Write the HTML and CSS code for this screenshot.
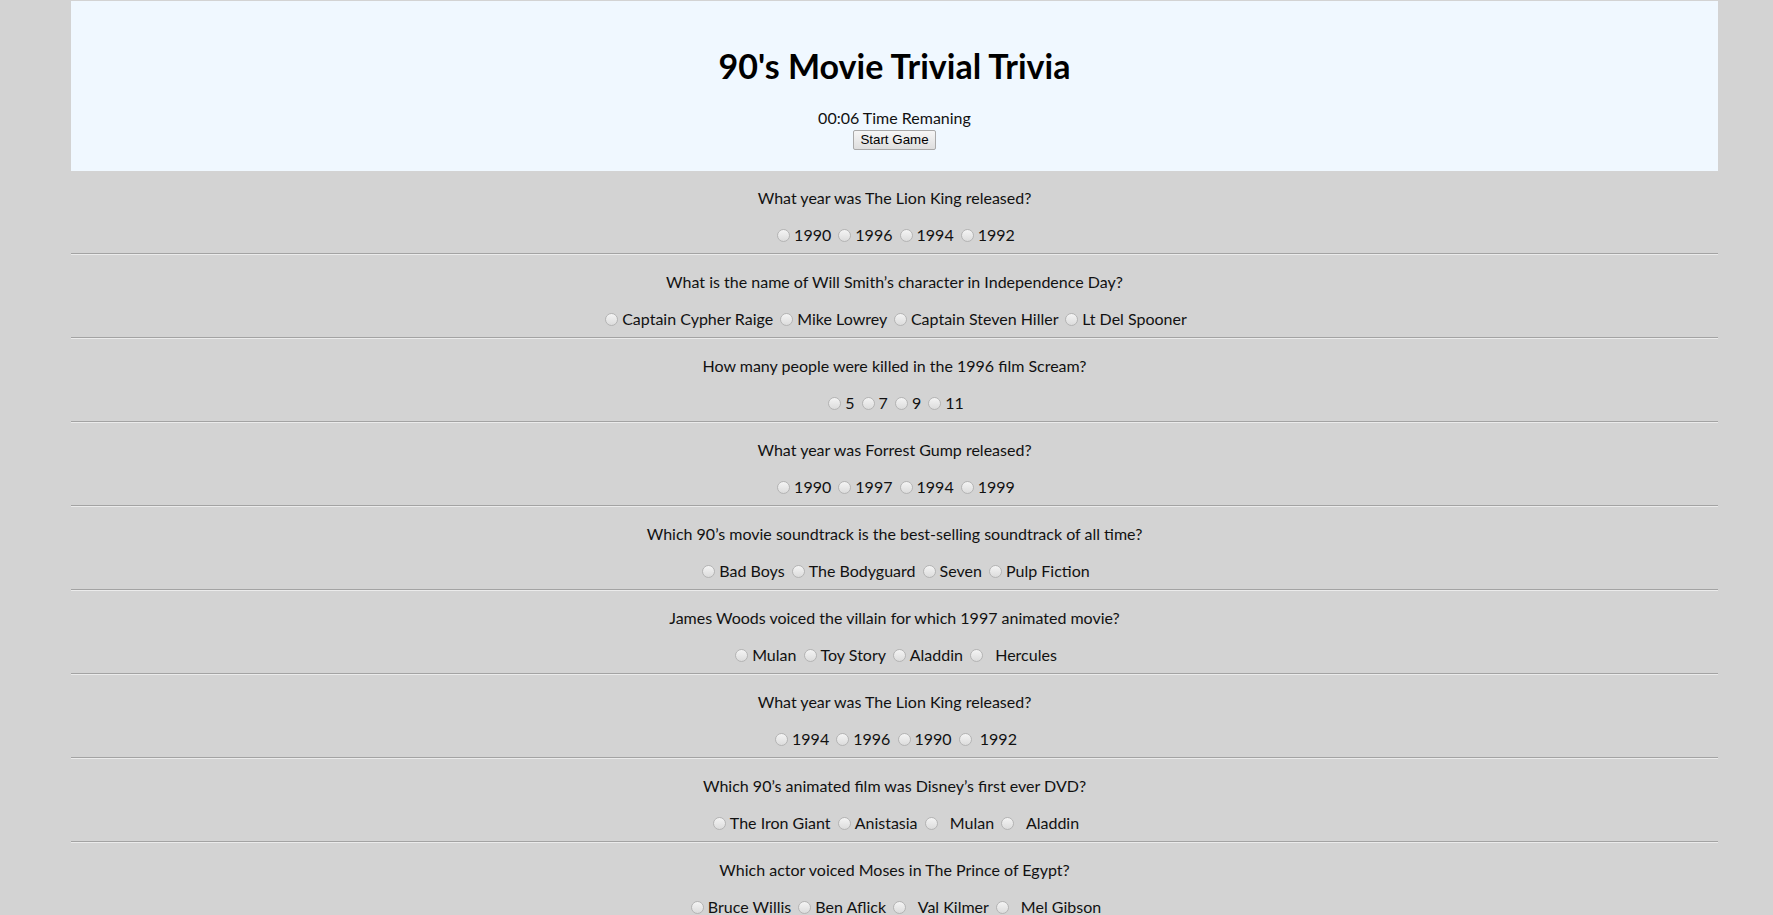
FILE: index.html
```html
<!DOCTYPE html>
<html lang="en">
<head>
<meta charset="utf-8">
<title>90's Movie Trivial Trivia</title>
<link rel="stylesheet" href="styles.css">
</head>
<body>
<div class="page">
  <header class="banner">
    <h1 class="title">90's Movie Trivial Trivia</h1>
    <p class="timer">00:06 Time Remaning</p>
    <button class="start-btn" type="button">Start Game</button>
  </header>

  <section class="question">
    <p class="q-text">What year was The Lion King released?</p>
    <div class="answers"><input class="radio" type="radio" name="q1">1990 <input class="radio" type="radio" name="q1">1996 <input class="radio" type="radio" name="q1">1994 <input class="radio" type="radio" name="q1">1992</div>
    <hr class="divider">
  </section>

  <section class="question">
    <p class="q-text">What is the name of Will Smith’s character in Independence Day?</p>
    <div class="answers"><input class="radio" type="radio" name="q2">Captain Cypher Raige <input class="radio" type="radio" name="q2">Mike Lowrey <input class="radio" type="radio" name="q2">Captain Steven Hiller <input class="radio" type="radio" name="q2">Lt Del Spooner</div>
    <hr class="divider">
  </section>

  <section class="question">
    <p class="q-text">How many people were killed in the 1996 film Scream?</p>
    <div class="answers"><input class="radio" type="radio" name="q3">5 <input class="radio" type="radio" name="q3">7 <input class="radio" type="radio" name="q3">9 <input class="radio" type="radio" name="q3">11</div>
    <hr class="divider">
  </section>

  <section class="question">
    <p class="q-text">What year was Forrest Gump released?</p>
    <div class="answers"><input class="radio" type="radio" name="q4">1990 <input class="radio" type="radio" name="q4">1997 <input class="radio" type="radio" name="q4">1994 <input class="radio" type="radio" name="q4">1999</div>
    <hr class="divider">
  </section>

  <section class="question">
    <p class="q-text">Which 90’s movie soundtrack is the best-selling soundtrack of all time?</p>
    <div class="answers"><input class="radio" type="radio" name="q5">Bad Boys <input class="radio" type="radio" name="q5">The Bodyguard <input class="radio" type="radio" name="q5">Seven <input class="radio" type="radio" name="q5">Pulp Fiction</div>
    <hr class="divider">
  </section>

  <section class="question">
    <p class="q-text">James Woods voiced the villain for which 1997 animated movie?</p>
    <div class="answers"><input class="radio" type="radio" name="q6">Mulan <input class="radio" type="radio" name="q6">Toy Story <input class="radio" type="radio" name="q6">Aladdin <input class="radio" type="radio" name="q6">&nbsp; Hercules</div>
    <hr class="divider">
  </section>

  <section class="question">
    <p class="q-text">What year was The Lion King released?</p>
    <div class="answers"><input class="radio" type="radio" name="q7">1994 <input class="radio" type="radio" name="q7">1996 <input class="radio" type="radio" name="q7">1990 <input class="radio" type="radio" name="q7">&nbsp;1992</div>
    <hr class="divider">
  </section>

  <section class="question">
    <p class="q-text">Which 90’s animated film was Disney’s first ever DVD?</p>
    <div class="answers"><input class="radio" type="radio" name="q8">The Iron Giant <input class="radio" type="radio" name="q8">Anistasia <input class="radio" type="radio" name="q8">&nbsp; Mulan <input class="radio" type="radio" name="q8">&nbsp; Aladdin</div>
    <hr class="divider">
  </section>

  <section class="question">
    <p class="q-text">Which actor voiced Moses in The Prince of Egypt?</p>
    <div class="answers"><input class="radio" type="radio" name="q9">Bruce Willis <input class="radio" type="radio" name="q9">Ben Aflick <input class="radio" type="radio" name="q9">&nbsp; Val Kilmer <input class="radio" type="radio" name="q9">&nbsp; Mel Gibson</div>
    <hr class="divider">
  </section>
</div>
</body>
</html>
```

FILE: styles.css
```css
html, body {
  margin: 0;
  padding: 0;
}

body {
  background: #d3d3d3;
  font-family: "Lato", "Open Sans", sans-serif;
  font-size: 16px;
  color: #111;
}

.page {
  margin: 1px 55px 0 71px;
}

.banner {
  background: #f0f8ff;
  text-align: center;
  padding: 45px 0 21px;
}

.title {
  margin: 0;
  font-size: 34px;
  line-height: 40px;
  font-weight: 700;
  color: #000;
}

.timer {
  margin: 21px 0 0;
  line-height: 21px;
}

.start-btn {
  margin-top: 1px;
  font-family: "Liberation Sans", Arial, sans-serif;
  font-size: 13.3333px;
  line-height: 16px;
  padding: 1px 6px;
  color: #000;
  background: linear-gradient(#f6f6f6, #dedede);
  border: 1px solid #a9a9a9;
  border-radius: 2px;
  height: 20px;
}

.question {
  text-align: center;
  padding-top: 16px;
}

.q-text {
  margin: 0;
  line-height: 21px;
}

.answers {
  margin-top: 16px;
  line-height: 21px;
}

.radio {
  -webkit-appearance: none;
  appearance: none;
  width: 13px;
  height: 13px;
  margin: 0 4px 0 3px;
  border: 1px solid #b4b4b4;
  border-radius: 50%;
  background: linear-gradient(#f4f4f4, #dcdcdc);
  vertical-align: -1px;
  box-sizing: border-box;
}

.divider {
  margin: 8px 0 0;
  border: 0;
  border-top: 1px solid #a3a3a3;
  border-bottom: 1px solid #ebebeb;
  height: 0;
}
```
